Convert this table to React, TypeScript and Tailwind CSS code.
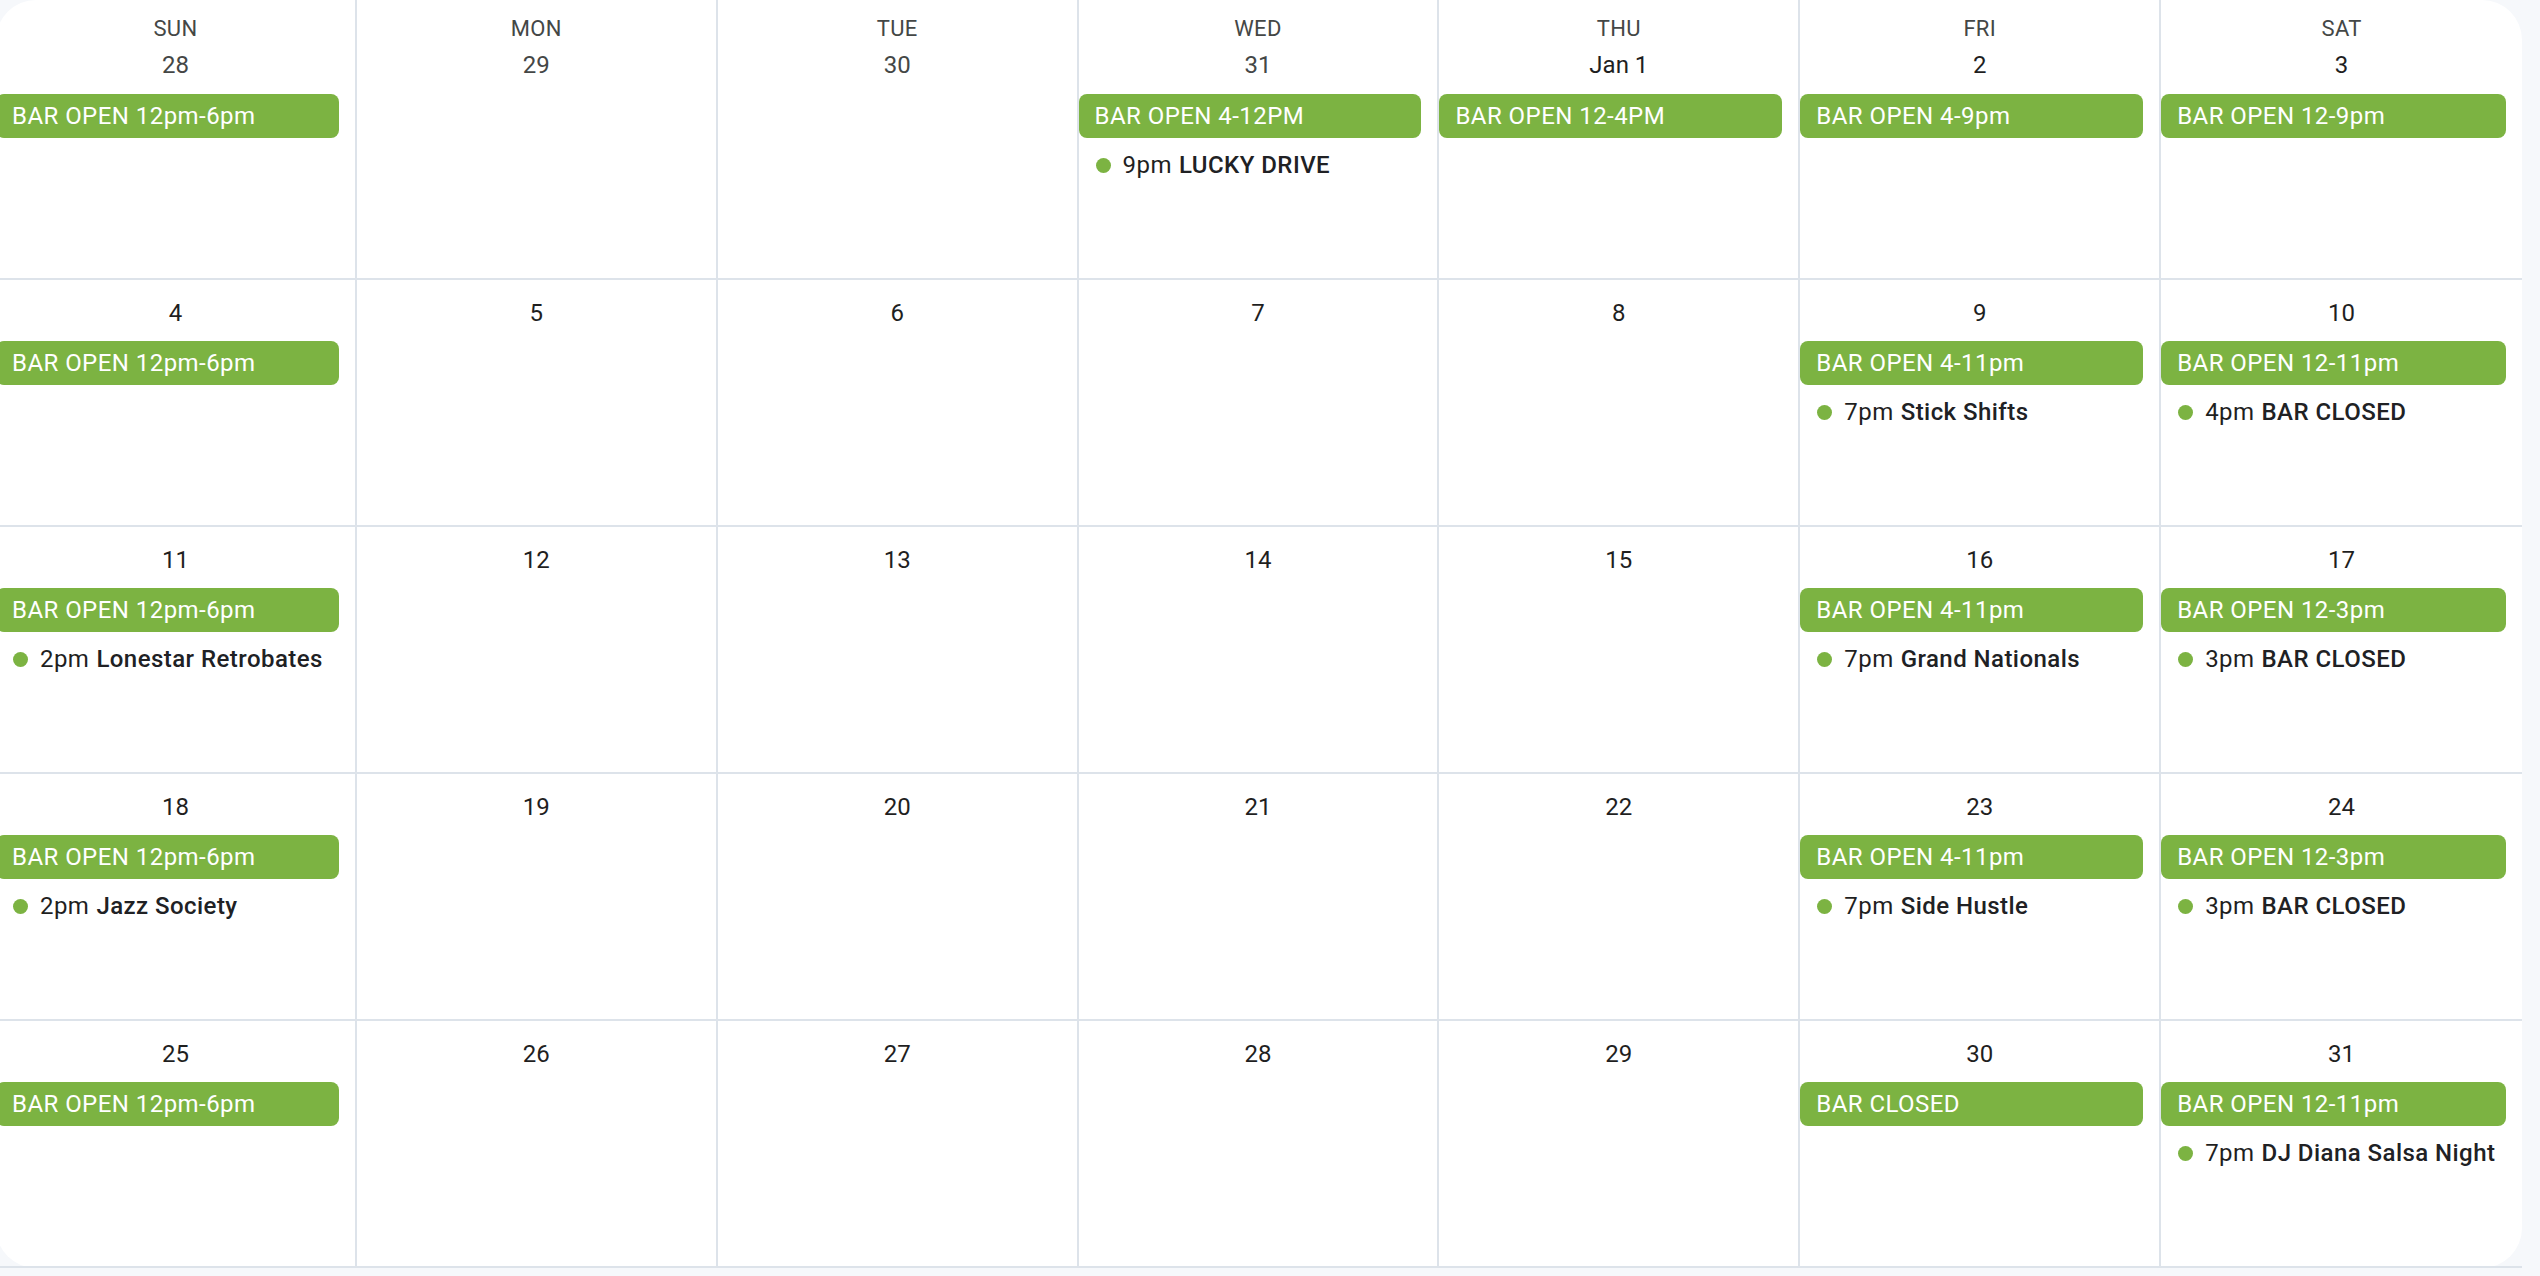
import React from "react";

type Ev = { time: string; name: string };
type Day = { label: string; muted?: boolean; bar?: string; ev?: Ev };

const HEADERS = ["SUN", "MON", "TUE", "WED", "THU", "FRI", "SAT"];

const WEEKS: Day[][] = [
  [
    { label: "28", muted: true, bar: "BAR OPEN 12pm-6pm" },
    { label: "29", muted: true },
    { label: "30", muted: true },
    { label: "31", muted: true, bar: "BAR OPEN 4-12PM", ev: { time: "9pm", name: "LUCKY DRIVE" } },
    { label: "Jan 1", bar: "BAR OPEN 12-4PM" },
    { label: "2", bar: "BAR OPEN 4-9pm" },
    { label: "3", bar: "BAR OPEN 12-9pm" },
  ],
  [
    { label: "4", bar: "BAR OPEN 12pm-6pm" },
    { label: "5" },
    { label: "6" },
    { label: "7" },
    { label: "8" },
    { label: "9", bar: "BAR OPEN 4-11pm", ev: { time: "7pm", name: "Stick Shifts" } },
    { label: "10", bar: "BAR OPEN 12-11pm", ev: { time: "4pm", name: "BAR CLOSED" } },
  ],
  [
    { label: "11", bar: "BAR OPEN 12pm-6pm", ev: { time: "2pm", name: "Lonestar Retrobates" } },
    { label: "12" },
    { label: "13" },
    { label: "14" },
    { label: "15" },
    { label: "16", bar: "BAR OPEN 4-11pm", ev: { time: "7pm", name: "Grand Nationals" } },
    { label: "17", bar: "BAR OPEN 12-3pm", ev: { time: "3pm", name: "BAR CLOSED" } },
  ],
  [
    { label: "18", bar: "BAR OPEN 12pm-6pm", ev: { time: "2pm", name: "Jazz Society" } },
    { label: "19" },
    { label: "20" },
    { label: "21" },
    { label: "22" },
    { label: "23", bar: "BAR OPEN 4-11pm", ev: { time: "7pm", name: "Side Hustle" } },
    { label: "24", bar: "BAR OPEN 12-3pm", ev: { time: "3pm", name: "BAR CLOSED" } },
  ],
  [
    { label: "25", bar: "BAR OPEN 12pm-6pm" },
    { label: "26" },
    { label: "27" },
    { label: "28" },
    { label: "29" },
    { label: "30", bar: "BAR CLOSED" },
    { label: "31", bar: "BAR OPEN 12-11pm", ev: { time: "7pm", name: "DJ Diana Salsa Night" } },
  ],
];

function Cell({ day, header, last }: { day: Day; header?: string; last: boolean }) {
  const base = "flex flex-col border-b-2 border-[#dde3ea] min-w-0";
  const right = last ? "" : " border-r-2";
  const size = header ? " h-[280px] pt-[15px]" : " h-[247px] pt-[17px]";
  return (
    <div className={base + right + size}>
      {header && (
        <div className="h-[28px] text-center text-[22px] leading-[28px] tracking-[0.3px] text-[#444746]">{header}</div>
      )}
      <div
        className={
          (header ? "mt-[6px] " : "") +
          "h-[32px] text-center text-[24px] leading-[32px] " +
          (day.muted ? "text-[#444746]" : "text-[#1f1f1f]")
        }
      >
        {day.label}
      </div>
      {day.bar && (
        <div className={(header ? "mt-[13px] " : "mt-[12px] ") + "mr-[16px] h-[44px] rounded-[8px] bg-[#7cb342] pl-[16px] text-[24px] leading-[44px] tracking-[0.45px] text-white whitespace-nowrap overflow-hidden"}>
          {day.bar}
        </div>
      )}
      {day.ev && (
        <div className="mt-[11px] flex h-[32px] items-center pl-[17px] whitespace-nowrap text-[24px] leading-[32px] text-[#1f1f1f] tracking-[0.45px]">
          <span className="h-[15px] w-[15px] shrink-0 rounded-full bg-[#7cb342]" />
          <span className="ml-[12px]">{day.ev.time}</span>
          <span className="ml-[7px] font-medium text-[#202124]">{day.ev.name}</span>
        </div>
      )}
    </div>
  );
}

export default function App() {
  return (
    <div className="h-[1276px] w-[2540px] overflow-hidden bg-[#f6f8fb] font-['Roboto',sans-serif]">
      <div className="-ml-[4px] grid w-[2526px] grid-cols-7 rounded-[40px] bg-white">
        {WEEKS.map((week, wi) =>
          week.map((day, di) => (
            <Cell key={wi + "-" + di} day={day} header={wi === 0 ? HEADERS[di] : undefined} last={di === 6} />
          ))
        )}
      </div>
    </div>
  );
}
